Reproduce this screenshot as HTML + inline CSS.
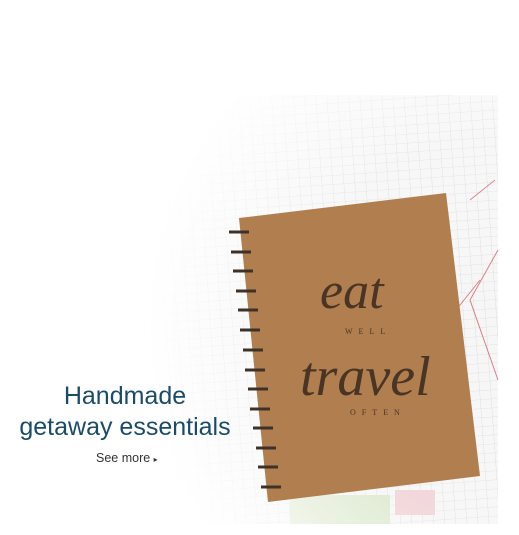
<!DOCTYPE html>
<html><head><meta charset="utf-8"><style>
html,body{margin:0;padding:0;background:#fff;width:519px;height:535px;overflow:hidden;font-family:"Liberation Sans",sans-serif}
.t{position:absolute;left:0;width:250px;text-align:center;color:#1d4b64;font-size:25px;line-height:31px}
.s{position:absolute;left:96px;top:451px;font-size:12.5px;color:#333}
</style></head><body>
<svg width="519" height="535" style="position:absolute;left:0;top:0">
<defs>
<radialGradient id="g" cx="500" cy="330" r="400" gradientUnits="userSpaceOnUse">
<stop offset="0" stop-color="#fff" stop-opacity="1"/><stop offset="0.5" stop-color="#fff" stop-opacity="0.85"/><stop offset="0.9" stop-color="#fff" stop-opacity="0"/>
</radialGradient>
<mask id="m"><rect x="0" y="0" width="519" height="535" fill="url(#g)"/></mask>
<pattern id="p" width="11" height="9" patternUnits="userSpaceOnUse" patternTransform="rotate(-4)">
<rect width="11" height="9" fill="#f5f6f5"/><path d="M0 0H11M0 0V9" stroke="#cdd1d5" stroke-width="0.6"/>
</pattern>
</defs>
<g mask="url(#m)">
<rect x="130" y="95" width="368" height="429" fill="url(#p)"/>
<path d="M470 200 L495 180 M480 280 L440 330 M498 250 L470 300 L498 380" stroke="#d77a86" stroke-width="1" fill="none"/>
<rect x="290" y="495" width="100" height="29" fill="#dbe8cc"/>
<rect x="395" y="490" width="40" height="25" fill="#f0d2d6"/>
</g>
<polygon points="239,218 446,193 480,476 268,502" fill="#b17e50"/>
<g stroke="#3d3128" stroke-width="3" fill="none">
<path d="M229 232 h20"/><path d="M231 252 h20"/><path d="M233 271 h20"/><path d="M236 291 h20"/><path d="M238 310 h20"/><path d="M240 330 h20"/><path d="M243 350 h20"/><path d="M245 370 h20"/><path d="M248 389 h20"/><path d="M250 409 h20"/><path d="M253 428 h20"/><path d="M256 448 h20"/><path d="M258 467 h20"/><path d="M261 487 h20"/>
</g>
<g fill="#4a3424" font-family="Liberation Serif,serif">
<text x="320" y="308" font-size="52" font-style="italic">eat</text>
<text x="345" y="334" font-size="8" letter-spacing="6">WELL</text>
<text x="300" y="395" font-size="56" font-style="italic">travel</text>
<text x="350" y="415" font-size="8" letter-spacing="6">OFTEN</text>
</g>
</svg>
<div class="t" style="top:381px">Handmade</div>
<div class="t" style="top:412px">getaway essentials</div>
<div class="s">See more <span style="font-size:8px">▸</span></div>
</body></html>
